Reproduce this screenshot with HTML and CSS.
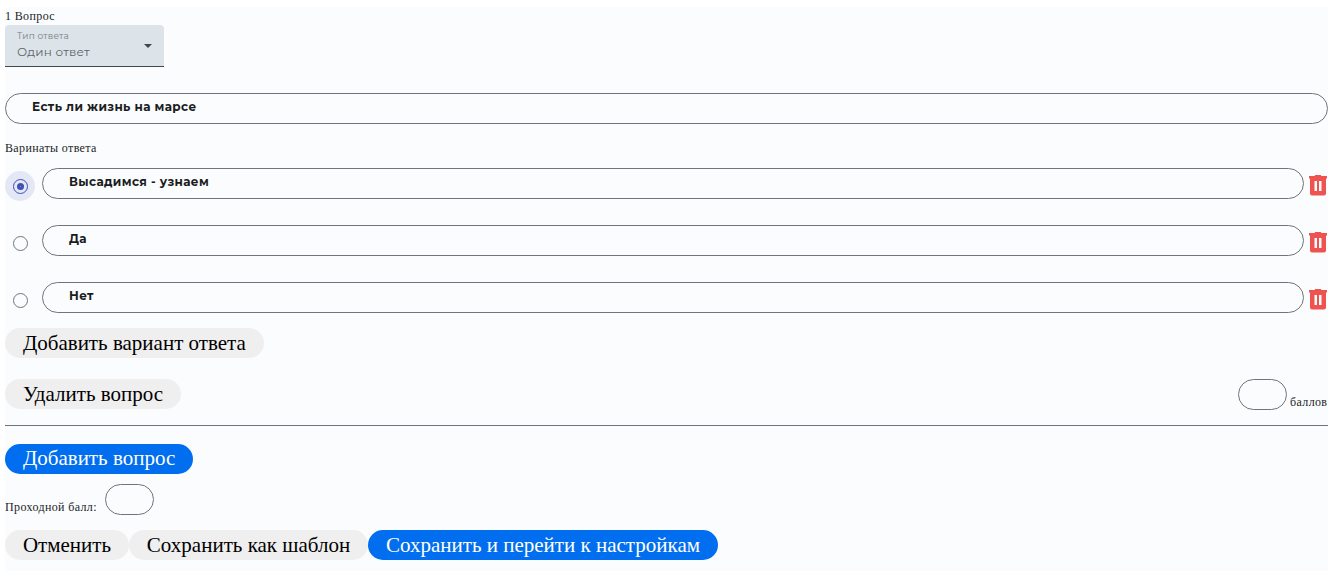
FILE: index.html
```html
<!DOCTYPE html>
<html lang="ru">
<head>
    <meta charset="UTF-8">
    <meta name="viewport" content="width=device-width, initial-scale=1.0">
    <title>Редактор теста</title>
    <link rel="stylesheet" href="styles.css">
</head>
<body>
    <main class="test-editor">
        <div class="question-number">1 Вопрос</div>

        <div class="type-select">
            <div class="type-text">
                <span class="type-label">Тип ответа</span>
                <span class="type-value">Один ответ</span>
            </div>
            <svg class="type-arrow" viewBox="0 0 8 4"><path d="M0 0h8L4 4z"/></svg>
        </div>

        <div class="field question-field">Есть ли жизнь на марсе</div>

        <div class="answers-title">Варинаты ответа</div>

        <div class="answer">
            <div class="radio checked"><span class="circle"></span></div>
            <div class="field">Высадимся - узнаем</div>
            <svg class="trash" viewBox="0 0 18 20"><path fill-rule="evenodd" d="M0 1h5.500L6.300 0h5.400l.8 1H18v2.500h-1V18.500a2 2 0 0 1-2 2H3a2 2 0 0 1-2-2V3.500H0zM5.500 6v10h2.500V6zM10 6v10h2.500V6z"/></svg>
        </div>
        <div class="answer">
            <div class="radio"><span class="circle"></span></div>
            <div class="field">Да</div>
            <svg class="trash" viewBox="0 0 18 20"><path fill-rule="evenodd" d="M0 1h5.500L6.300 0h5.400l.8 1H18v2.500h-1V18.500a2 2 0 0 1-2 2H3a2 2 0 0 1-2-2V3.500H0zM5.500 6v10h2.500V6zM10 6v10h2.500V6z"/></svg>
        </div>
        <div class="answer">
            <div class="radio"><span class="circle"></span></div>
            <div class="field">Нет</div>
            <svg class="trash" viewBox="0 0 18 20"><path fill-rule="evenodd" d="M0 1h5.500L6.300 0h5.400l.8 1H18v2.500h-1V18.500a2 2 0 0 1-2 2H3a2 2 0 0 1-2-2V3.500H0zM5.500 6v10h2.500V6zM10 6v10h2.500V6z"/></svg>
        </div>

        <button class="btn add-answer">Добавить вариант ответа</button>

        <div class="question-footer">
            <button class="btn">Удалить вопрос</button>
            <label class="points"><input class="points-input" type="text"><span class="points-text">баллов</span></label>
        </div>

        <button class="btn btn-primary add-question">Добавить вопрос</button>

        <label class="pass-score"><span class="pass-text">Проходной балл:</span><input class="points-input" type="text"></label>

        <div class="actions">
            <button class="btn">Отменить</button>
            <button class="btn">Сохранить как шаблон</button>
            <button class="btn btn-primary">Сохранить и перейти к настройкам</button>
        </div>
    </main>
</body>
</html>
```
FILE: styles.css
```css
* {
    margin: 0;
    padding: 0;
    box-sizing: border-box;
}

body {
    background: #fff;
    color: #1a1c1e;
    font-family: "Liberation Serif", serif;
    font-size: 12px;
    line-height: 18px;
    letter-spacing: 0.37px;
    padding: 7px 6px 0 5px;
    overflow: hidden;
}

.test-editor {
    height: 564px;
    background: #fbfcfe;
}

.question-number {
    height: 18px;
}

.type-select {
    display: flex;
    justify-content: space-between;
    width: 159px;
    height: 42px;
    padding: 5px 12px 0;
    background: #dce3e9;
    border-bottom: 1px solid #41474d;
    border-radius: 4px 4px 0 0;
    font-family: Montserrat, "Open Sans", sans-serif;
}

.type-text {
    display: flex;
    flex-direction: column;
}

.type-label {
    height: 13px;
    font-size: 9px;
    line-height: 12px;
    letter-spacing: 0.2px;
    color: #7b8085;
}

.type-value {
    font-size: 12px;
    line-height: 18px;
    letter-spacing: 0.24px;
    color: #606367;
}

.type-arrow {
    width: 8px;
    height: 4px;
    margin-top: 14px;
    fill: #41474d;
}

.field {
    flex: 1;
    height: 31px;
    padding: 4px 26px;
    border: 1px solid #70757a;
    border-radius: 16px;
    font-family: Montserrat, "Open Sans", sans-serif;
    font-weight: 700;
}

.question-field {
    margin-top: 26px;
}

.answers-title {
    height: 18px;
    margin: 15px 0 11px;
}

.answer {
    display: flex;
    height: 31px;
    margin-bottom: 26px;
}

.radio {
    display: flex;
    align-items: center;
    justify-content: center;
    width: 30px;
    height: 30px;
    margin: 3px 7px 0 0;
    border-radius: 50%;
}

.circle {
    display: flex;
    align-items: center;
    justify-content: center;
    width: 15px;
    height: 15px;
    margin-left: 1px;
    margin-top: 1px;
    border: 1px solid #70757a;
    border-radius: 50%;
}

.checked {
    background: #e4e7f6;
}

.checked .circle {
    border-color: #3f51b5;
}

.checked .circle::after {
    content: "";
    width: 7px;
    height: 7px;
    background: radial-gradient(circle, #8591d0 0.5px, #3f51b5 1px);
    border-radius: 50%;
}

.trash {
    width: 18px;
    height: 20px;
    margin: 7px 1px 0 5px;
    overflow: visible;
    fill: #ef5350;
}

.btn {
    display: block;
    height: 30px;
    padding: 0 17.9px;
    border: none;
    border-radius: 15px;
    background: #efefef;
    color: #000;
    font-family: "Liberation Serif", serif;
    font-size: 21px;
    line-height: 30px;
    white-space: nowrap;
}

.btn-primary {
    background: #006eee;
    color: #fff;
}

.add-answer {
    margin-top: -11px;
}

.question-footer {
    display: flex;
    justify-content: space-between;
    height: 47px;
    margin-top: 21px;
    border-bottom: 1px solid #70757a;
}

.points {
    display: flex;
    gap: 3px;
}

.points-input {
    width: 49px;
    height: 31px;
    border: 1px solid #70757a;
    border-radius: 16px;
    background: transparent;
}

.points-text {
    width: 38px;
    margin-top: 14px;
}

.add-question {
    margin-top: 18px;
    padding-bottom: 2px;
    line-height: 28px;
}

.pass-score {
    display: flex;
    gap: 8px;
    margin: 10px 0 15px;
}

.pass-text {
    width: 92px;
    margin-top: 14px;
    white-space: nowrap;
}

.actions {
    display: flex;
    margin-top: -1px;
}
```
